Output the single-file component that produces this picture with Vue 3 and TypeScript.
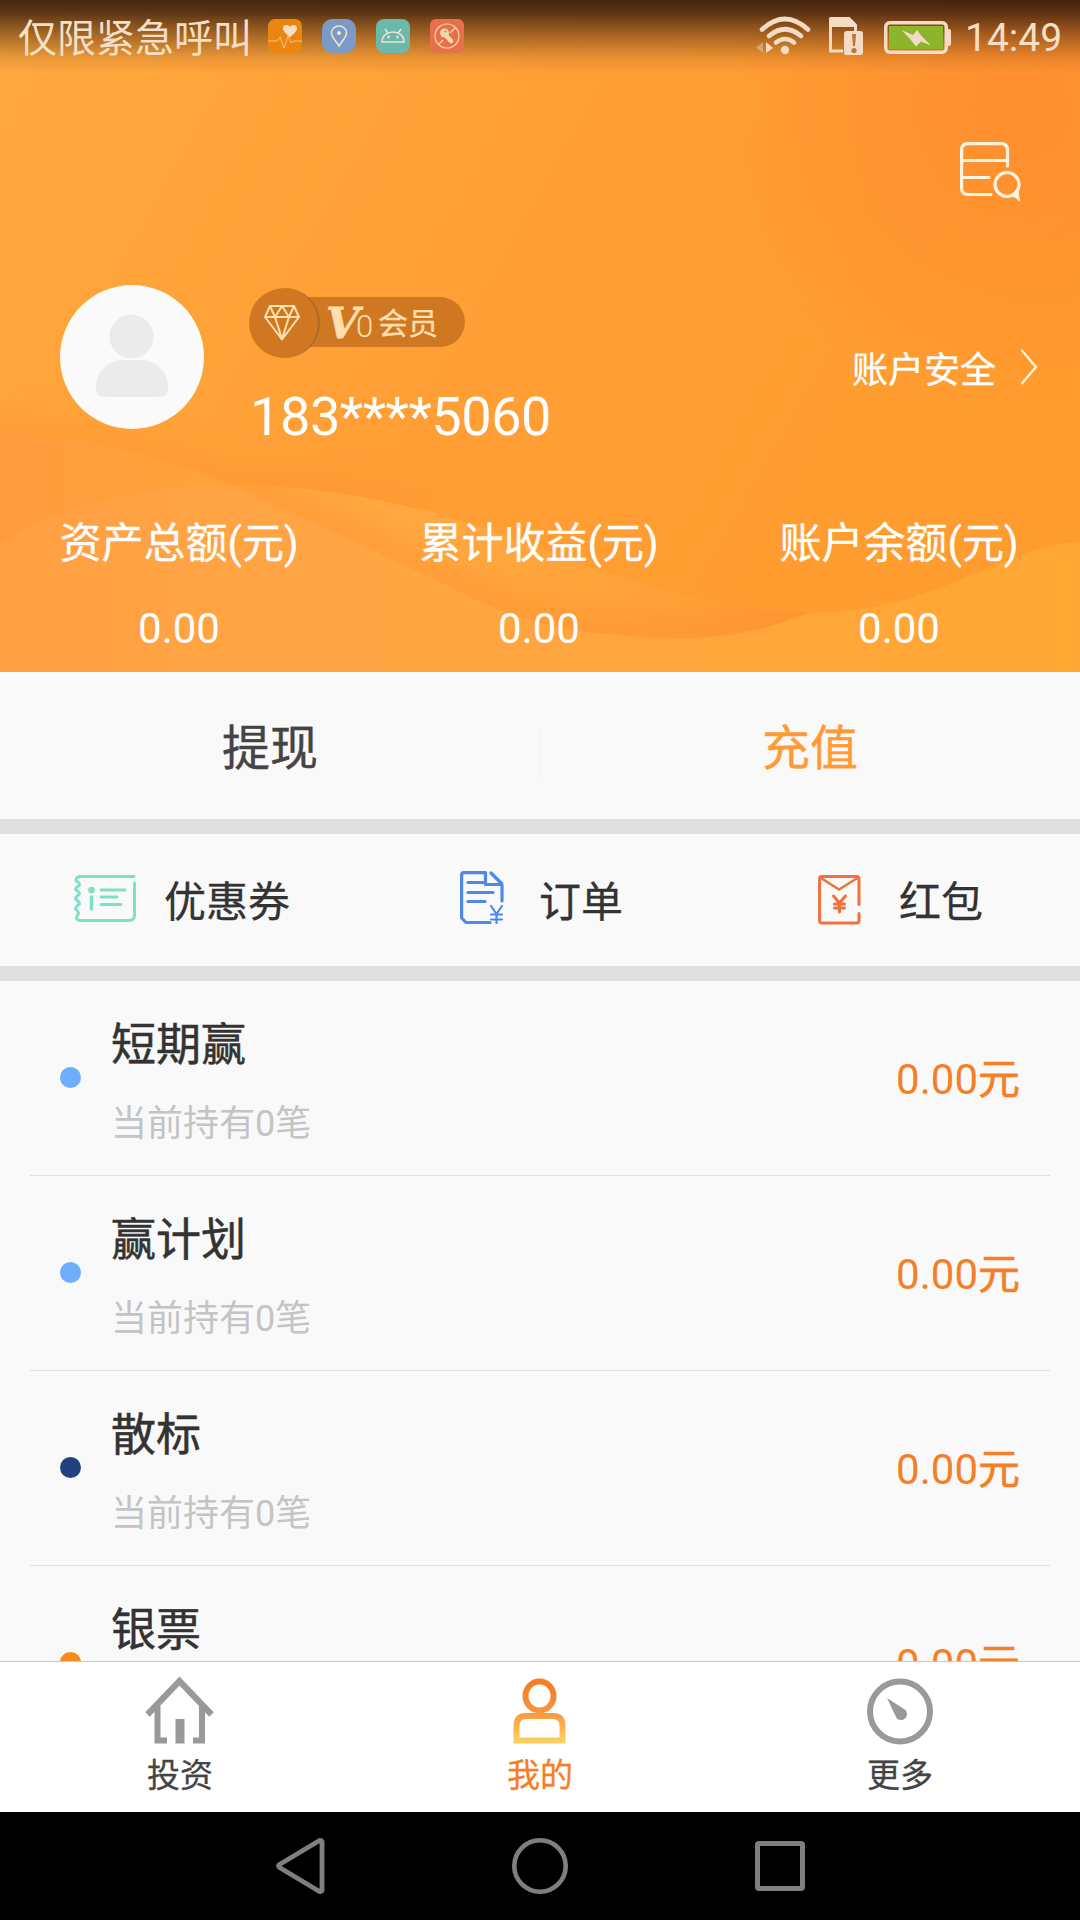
<script setup lang="ts">
interface Stat { label: string; value: string }
interface Holding { name: string; note: string; amount: string; color: string }

const stats: Stat[] = [
  { label: '资产总额(元)', value: '0.00' },
  { label: '累计收益(元)', value: '0.00' },
  { label: '账户余额(元)', value: '0.00' },
]

const holdings: Holding[] = [
  { name: '短期赢', note: '当前持有0笔', amount: '0.00', color: '#6fadfd' },
  { name: '赢计划', note: '当前持有0笔', amount: '0.00', color: '#6fadfd' },
  { name: '散标', note: '当前持有0笔', amount: '0.00', color: '#21417f' },
  { name: '银票', note: '当前持有0笔', amount: '0.00', color: '#f58a1f' },
]
</script>

<template>
  <div class="screen">
    <header class="hero">
      <svg class="waves" width="1080" height="672" viewBox="0 0 1080 672">
        <defs>
          <linearGradient id="base" x1="0" y1="0" x2="1" y2="0.35">
            <stop offset="0" stop-color="#ffa93e" />
            <stop offset="0.5" stop-color="#ff9f36" />
            <stop offset="1" stop-color="#ff9c2f" />
          </linearGradient>
          <radialGradient id="warm" gradientUnits="userSpaceOnUse" cx="1020" cy="110" r="300">
            <stop offset="0" stop-color="#ff8e2f" />
            <stop offset="1" stop-color="#ff8e2f" stop-opacity="0" />
          </radialGradient>
          <linearGradient id="fillA" x1="0" y1="0" x2="1" y2="0">
            <stop offset="0" stop-color="#ff9b3f" />
            <stop offset="0.4" stop-color="#ff9f3c" />
            <stop offset="1" stop-color="#ffa338" />
          </linearGradient>
          <linearGradient id="fillB" gradientUnits="userSpaceOnUse" x1="420" y1="500" x2="800" y2="620">
            <stop offset="0" stop-color="#ffa841" />
            <stop offset="0.6" stop-color="#ffa23a" />
            <stop offset="1" stop-color="#ff9a32" />
          </linearGradient>
          <linearGradient id="fillC" x1="0" y1="0" x2="1" y2="0">
            <stop offset="0" stop-color="#ffa043" />
            <stop offset="0.3" stop-color="#ffa544" />
            <stop offset="1" stop-color="#ffa733" />
          </linearGradient>
          <filter id="soft" filterUnits="userSpaceOnUse" x="-60" y="340" width="1200" height="360">
            <feGaussianBlur stdDeviation="14" />
          </filter>
          <clipPath id="clipA"><path d="M0 432C90 436 180 462 230 485C330 530 400 562 470 597C540 632 620 638 690 638C760 635 800 618 860 592C940 558 1000 530 1080 510V672H0Z" /></clipPath>
          <clipPath id="clipB"><path d="M0 546C60 503 150 485 240 485C330 487 410 503 490 530C570 560 680 606 800 612C930 618 1000 545 1080 542V672H0Z" /></clipPath>
        </defs>
        <rect width="1080" height="672" fill="url(#base)" />
        <rect width="1080" height="672" fill="url(#warm)" />
        <path d="M-30 428C90 432 180 460 230 481C310 488 370 494 430 509" fill="none" stroke="#ff8f2c" stroke-opacity="0.5" stroke-width="24" filter="url(#soft)" />
        <g clip-path="url(#clipA)"><rect width="240" height="672" fill="url(#fillA)" /></g>
        <g clip-path="url(#clipB)">
          <rect width="1080" height="672" fill="url(#fillB)" />
          <path d="M230 481C330 526 400 558 470 593C540 628 620 634 690 634C740 631 770 622 810 609" fill="none" stroke="#ff8f2c" stroke-opacity="0.6" stroke-width="26" filter="url(#soft)" />
          <g clip-path="url(#clipA)"><rect width="1080" height="672" fill="url(#fillC)" /></g>
        </g>
      </svg>

      <div class="status">
        <span class="carrier">仅限紧急呼叫</span>
        <div class="notices">
          <svg width="34" height="34" viewBox="0 0 34 34">
            <rect width="34" height="34" rx="7" fill="#ea8610" />
            <path d="M0 22H9L12 18L16 29L20 17L23 24L26 22H34" fill="none" stroke="#f9c283" stroke-width="1" />
            <path d="M22 18C18 15 15 12 15 9.500C15 5.500 20 5 22 8C24 5 29 5.500 29 9.500C29 12 26 15 22 18Z" fill="#f6dfc2" />
          </svg>
          <svg width="34" height="34" viewBox="0 0 34 34">
            <rect width="34" height="34" rx="10" fill="#7c9ac6" />
            <path d="M17 27C14 22 9.500 18 9.500 14A7.500 7 0 0 1 24.500 14C24.500 18 20 22 17 27Z" fill="none" stroke="#f3e3d2" stroke-width="1.500" />
            <circle cx="17" cy="14" r="2" fill="#f3e3d2" />
          </svg>
          <svg width="34" height="34" viewBox="0 0 34 34">
            <rect width="34" height="34" rx="8" fill="#6bb9ab" />
            <path d="M6 23C6 9.500 28 9.500 28 23ZM9 10L12 14M25 10L22 14" fill="none" stroke="#f3e3d2" stroke-width="1.500" />
            <path d="M11 18H14M20 18H23M12.500 16.500V19.500M21.500 16.500V19.500" stroke="#f3e3d2" stroke-width="1.200" />
          </svg>
          <svg width="34" height="34" viewBox="0 0 34 34">
            <rect width="34" height="34" rx="6" fill="#e67049" />
            <circle cx="17" cy="17" r="12" fill="none" stroke="#f5d7ae" stroke-width="1.200" />
            <path d="M25.500 8.500L20 14M13 21L8.500 25.500" stroke="#f5d7ae" stroke-width="1.200" />
            <circle cx="14.500" cy="14" r="4.500" fill="#f5d7ae" />
            <path d="M15.500 16L21 22" stroke="#f5d7ae" stroke-width="4.500" stroke-linecap="round" />
            <circle cx="15.500" cy="12.500" r="1" fill="#e67049" />
          </svg>
        </div>
        <div class="signals">
          <svg width="56" height="42" viewBox="0 0 56 42">
            <g fill="none" stroke="#f3dcc3" stroke-width="4.600" stroke-linecap="round">
              <path d="M6 14.500Q29 -6.500 52 14.500" />
              <path d="M13 21Q29 7.500 45 21" />
              <path d="M20 27.500Q29 20.500 38 27.500" />
            </g>
            <circle cx="29" cy="35" r="4.200" fill="#f3dcc3" />
            <path d="M7 27V38L0 32.500Z" fill="#f3dcc3" opacity="0.4" />
            <path d="M10 27L17 33L10 38Z" fill="#f3dcc3" />
          </svg>
          <svg class="sim" width="34" height="38" viewBox="0 0 34 38">
            <path d="M14 34H1.500V1.500H20L26.500 8V14" fill="none" stroke="#f3dcc3" stroke-width="3" stroke-linejoin="round" />
            <path d="M1 1H20L27 8V10H1Z" fill="#f3dcc3" />
            <rect x="15" y="14" width="19" height="24" rx="2.500" fill="#f3dcc3" />
            <path d="M23 17H27L26 29H24Z" fill="#b97634" />
            <circle cx="25" cy="33.500" r="2.600" fill="#b97634" />
          </svg>
          <svg class="battery" width="67" height="33" viewBox="0 0 67 33">
            <rect x="1.750" y="1.750" width="60.500" height="29.500" rx="4" fill="none" stroke="#f3dcc3" stroke-width="3.500" />
            <path d="M63 8H65Q67 8 67 10V23Q67 25 65 25H63Z" fill="#f3dcc3" />
            <rect x="5" y="5" width="54" height="23" fill="#8cb52b" />
            <path d="M17.500 9L29 14L33 9L38 15.500L47 24.500L37 20.500L32 25.500L26 18Z" fill="#f5d9c8" />
          </svg>
          <span class="clock">14:49</span>
        </div>
      </div>

      <div class="tools">
        <svg width="61" height="61" viewBox="0 0 61 61" fill="none" stroke="#fff4e0" stroke-width="3.200" stroke-linecap="round" stroke-linejoin="round">
          <path d="M47.500 24V8Q47.500 1.600 41 1.600H8Q1.600 1.600 1.600 8V46Q1.600 52.500 8 52.500H31M1.500 18.500H47.500M1.500 35.500H29" />
          <path d="M59 45Q57.500 52 59.500 59Q56 54 51 54" fill="#fff4e0" stroke-width="1" />
          <circle cx="47" cy="42.500" r="12" />
        </svg>
      </div>

      <div class="profile">
        <svg class="avatar" width="144" height="144" viewBox="0 0 144 144">
          <circle cx="72" cy="72" r="72" fill="#fafafa" />
          <circle cx="71.500" cy="51.500" r="22" fill="#ebebeb" />
          <path d="M36 103C36 86 48 75 64 75H80C96 75 108 86 108 103C108 109 105 112 99 112H45C39 112 36 109 36 103Z" fill="#ebebeb" />
        </svg>
        <div class="info">
          <div class="badge">
            <div class="pill"><i class="vee">V</i><span class="level">0</span><span class="member">会员</span></div>
            <div class="gem">
              <svg width="36" height="36" viewBox="0 0 36 36" fill="none" stroke="#ffdfae" stroke-width="2" stroke-linejoin="round">
                <path d="M6 1H30L35 12L18 34.500L1 12ZM1 12H35M6 1L11 12L18 1L25 12L30 1M11 12L18 34L25 12" />
              </svg>
            </div>
          </div>
          <div class="phone">183****5060</div>
        </div>
        <div class="security">
          <span>账户安全</span>
          <svg width="18" height="38" viewBox="0 0 18 38"><path d="M1.500 2L16 19L1.500 36" fill="none" stroke="#fff0d8" stroke-width="2.400" /></svg>
        </div>
      </div>

      <div class="stats">
        <div v-for="s in stats" :key="s.label" class="stat">
          <div class="stat-label">{{ s.label }}</div>
          <div class="stat-value">{{ s.value }}</div>
        </div>
      </div>
    </header>

    <div class="actions">
      <div class="action">提现</div>
      <div class="split"></div>
      <div class="action recharge">充值</div>
    </div>

    <div class="quick">
      <div class="entry coupon">
        <svg width="62" height="47" viewBox="0 0 62 47" fill="none" stroke="#7ce0c8" stroke-width="2.900" stroke-linecap="round" stroke-linejoin="round">
          <path d="M60 1.500H6Q1.500 2 2 6Q6 8 5.500 10Q1.500 13 1.500 14.500Q5.500 17 5.500 19Q1.500 22 1.500 24Q5.500 27 5.500 29Q1.500 32 1.500 34Q5 37 4.500 38.500Q0 45 6 45.500H55Q60.500 45.500 60.500 40V8" />
          <path d="M27 15H51M27 22H43M27 29.500H47" />
          <path d="M17.500 22V34" stroke-width="3.600" />
          <circle cx="17.500" cy="15" r="1.900" fill="#7ce0c8" />
        </svg>
        <span>优惠券</span>
      </div>
      <div class="entry order">
        <svg width="44" height="54" viewBox="0 0 44 54" fill="none" stroke="#4f88ea" stroke-width="3.200" stroke-linecap="round" stroke-linejoin="round">
          <path d="M30 51.500H6L1.600 47V4Q1.600 1.600 4 1.600H25.500V13.500H42V30M31 2L41.500 12.500" />
          <path d="M8 11.500H24M8 21.500H33M8 30.500H25" />
          <path d="M31 35L36.500 43L42 35M36.500 43V52M31 43.500H42M31 48.500H42" stroke-width="2.200" />
        </svg>
        <span>订单</span>
      </div>
      <div class="entry packet">
        <svg width="43" height="50" viewBox="0 0 43 50" fill="none" stroke="#f0713c" stroke-width="3" stroke-linecap="round" stroke-linejoin="round">
          <path d="M41 29.500V4Q41 1.600 38.500 1.600H4Q1.600 1.600 1.600 4V45.500Q1.600 48 4 48H38.500Q41 48 41 45.500V38.500" />
          <path d="M3 3L21 14.500L39.500 3" stroke-width="2.600" />
          <path d="M15.500 21L21.500 28L27.500 21M21.500 28V37M16.500 29H26.500M16.500 33H26.500" />
        </svg>
        <span>红包</span>
      </div>
    </div>

    <main class="list">
      <div v-for="h in holdings" :key="h.name" class="row">
        <span class="dot" :style="{ background: h.color }"></span>
        <div class="texts">
          <div class="name">{{ h.name }}</div>
          <div class="note">{{ h.note }}</div>
        </div>
        <div class="amount">{{ h.amount }}<span class="unit">元</span></div>
      </div>
    </main>

    <nav class="tabs">
      <div class="tab">
        <svg width="70" height="70" viewBox="0 0 70 70" fill="none" stroke="#999" stroke-width="6.200">
          <path d="M2.500 38.500L34.500 5L66.500 38.500" />
          <path d="M22 64.500H12.500V30M57 30V64.500H48" stroke-width="6" />
          <path d="M35 43V67.500" stroke-width="9" />
        </svg>
        <span>投资</span>
      </div>
      <div class="tab active">
        <svg width="70" height="70" viewBox="0 0 70 70" fill="none" stroke="url(#person)" stroke-width="6">
          <defs>
            <linearGradient id="person" gradientUnits="userSpaceOnUse" x1="0" y1="10" x2="0" y2="68">
              <stop offset="0" stop-color="#f57f26" />
              <stop offset="0.4" stop-color="#f8923a" />
              <stop offset="0.65" stop-color="#f9ac4d" />
              <stop offset="1" stop-color="#fcd462" />
            </linearGradient>
          </defs>
          <ellipse cx="34.500" cy="20" rx="14" ry="14.500" />
          <path d="M11.500 64.500V50Q11.500 40 21 40H48Q57.500 40 57.500 50V64.500Z" />
        </svg>
        <span>我的</span>
      </div>
      <div class="tab">
        <svg width="70" height="70" viewBox="0 0 70 70">
          <circle cx="35" cy="35.500" r="30" fill="none" stroke="#999" stroke-width="6" />
          <path d="M22 22L40.500 34A6 6 0 1 1 31.500 42Z" fill="#999" />
        </svg>
        <span>更多</span>
      </div>
    </nav>

    <footer class="keys">
      <svg width="58" height="58" viewBox="0 0 58 58"><path d="M51 4.500V53.500Q50.500 55 48.500 54.500L8.500 30.500Q6.500 29 8.500 27.500L48.500 3.500Q50.500 3 51 4.500Z" fill="none" stroke="#7f7f7f" stroke-width="4.800" stroke-linejoin="round" /></svg>
      <svg width="58" height="58" viewBox="0 0 58 58"><circle cx="29" cy="29" r="25.700" fill="none" stroke="#7f7f7f" stroke-width="4.600" /></svg>
      <svg width="58" height="58" viewBox="0 0 58 58"><rect x="6.500" y="6.500" width="45" height="45" rx="1.500" fill="none" stroke="#7f7f7f" stroke-width="5" /></svg>
    </footer>
  </div>
</template>

<style>
body { margin: 0; background: #f9f9f9; }
</style>

<style scoped>
.screen { width: 1080px; height: 1920px; display: flex; flex-direction: column; overflow: hidden; background: #f9f9f9; font-family: Roboto, "Noto Sans CJK SC", sans-serif; color: #333; white-space: nowrap; }
svg { display: block; flex: none; }

.hero { position: relative; flex: none; height: 672px; color: #fff; overflow: hidden; }
.waves { position: absolute; top: 0; left: 0; z-index: 0; }
.status, .tools, .profile, .stats { position: relative; }

.status { display: flex; align-items: center; height: 74px; box-sizing: border-box; padding: 0 19px 2px 18px; color: #f6dfc4; background: linear-gradient(rgba(35, 15, 8, 0.84) 0, rgba(35, 15, 8, 0.76) 11px, rgba(45, 20, 8, 0.42) 35px, rgba(45, 20, 8, 0.1) 58px, rgba(45, 20, 8, 0) 74px); }
.carrier { width: 250px; font-size: 39px; line-height: 60px; padding-top: 5px; }
.notices { display: flex; gap: 20px; }
.signals { display: flex; align-items: center; margin-left: auto; }
.sim { margin-left: 17px; }
.battery { margin-left: 21px; margin-top: 2px; }
.clock { margin-left: 14px; font-size: 39px; line-height: 60px; padding-top: 3px; width: 96px; text-align: right; }

.tools { display: flex; justify-content: flex-end; padding: 68px 59px 0 0; height: 143px; }

.profile { height: 162px; display: flex; padding-left: 60px; padding-right: 42px; align-items: flex-start; box-sizing: border-box; }
.info { margin-left: 45px; padding-top: 3px; }
.badge { position: relative; width: 216px; height: 70px; }
.pill { position: absolute; left: 36px; top: 9px; width: 180px; height: 50px; border-radius: 0 25px 25px 0; background: #d07821; color: #ffdfae; box-sizing: border-box; padding-left: 41px; display: flex; align-items: center; }
.gem { position: absolute; left: 0; top: 0; width: 71px; height: 70px; border-radius: 50%; background: #d07821; box-sizing: border-box; border-right: 2px solid #a9682a; display: flex; align-items: center; justify-content: center; padding-right: 3px; }
.vee { width: 30px; font-family: "DejaVu Serif", "Liberation Serif", serif; font-style: italic; font-weight: 700; font-size: 43px; line-height: 50px; padding-top: 2px; -webkit-text-stroke: 0.8px; }
.level { width: 21px; font-size: 31px; line-height: 50px; padding-top: 10px; font-weight: 300; }
.member { font-size: 30px; line-height: 50px; padding-top: 3px; margin-left: 1px; -webkit-text-stroke: 0.3px; }
.phone { margin-top: 29px; margin-left: 1px; font-size: 54px; line-height: 60px; letter-spacing: -0.4px; }
.security { margin-left: auto; margin-top: 53px; display: flex; align-items: flex-start; gap: 24px; font-size: 36px; line-height: 60px; height: 60px; -webkit-text-stroke: 0.3px; }
.security svg { margin-top: 10px; }
.security span { margin-top: 3px; }

.stats { display: flex; padding-top: 66px; margin-left: -1px; margin-right: 1px; }
.stat { flex: 1; text-align: center; font-size: 42px; line-height: 60px; }
.stat-label { padding-top: 1px; -webkit-text-stroke: 0.3px; }
.stat-value { margin-top: 25px; }

.actions { flex: none; height: 147px; display: flex; align-items: center; border-bottom: 15px solid #dfdfdf; font-size: 48px; line-height: 72px; color: #444; -webkit-text-stroke: 0.4px; }
.action { flex: 1; text-align: center; padding-top: 6px; }
.recharge { color: #ff9a35; }
.split { width: 1px; height: 51px; margin-top: 16px; margin-left: -1px; background: #f0f0f0; }

.quick { flex: none; height: 132px; display: flex; align-items: center; border-bottom: 15px solid #dfdfdf; font-size: 42px; line-height: 60px; -webkit-text-stroke: 0.3px; }
.entry { box-sizing: border-box; flex: 0 0 360px; display: flex; align-items: center; }
.coupon { padding-left: 74px; gap: 28px; }
.order { padding-left: 100px; gap: 35px; }
.packet { padding-left: 98px; gap: 38px; }
.entry span { margin-top: 5px; }
.coupon svg { margin-bottom: 3px; }
.order svg { margin-bottom: 4px; }

.list { flex: 1; min-height: 0; overflow: hidden; padding: 0 30px; }
.row { height: 195px; box-sizing: border-box; border-bottom: 1px solid #e0e0e0; display: flex; align-items: center; padding: 0 30px; }
.dot { width: 21px; height: 21px; border-radius: 50%; flex: none; margin-bottom: 1px; }
.texts { margin-left: 30px; flex: 1; padding-top: 8px; }
.name { font-size: 45px; line-height: 66px; -webkit-text-stroke: 0.5px; }
.note { font-size: 36px; line-height: 54px; margin-top: 18px; color: #c4c4c4; }
.amount { font-size: 42px; line-height: 60px; color: #f57f26; margin-top: 4px; }
.unit { -webkit-text-stroke: 0.6px; }

.tabs { flex: none; height: 151px; box-sizing: border-box; border-top: 1px solid #c8c8c8; background: #fff; display: flex; }
.tab { flex: 1; display: flex; flex-direction: column; align-items: center; padding-top: 14px; font-size: 33px; line-height: 48px; color: #444; }
.tab span { margin-top: 6px; -webkit-text-stroke: 0.3px; }
.active { color: #f57f26; }

.keys { flex: none; height: 108px; background: #000; display: flex; align-items: center; justify-content: center; gap: 182px; }
</style>
